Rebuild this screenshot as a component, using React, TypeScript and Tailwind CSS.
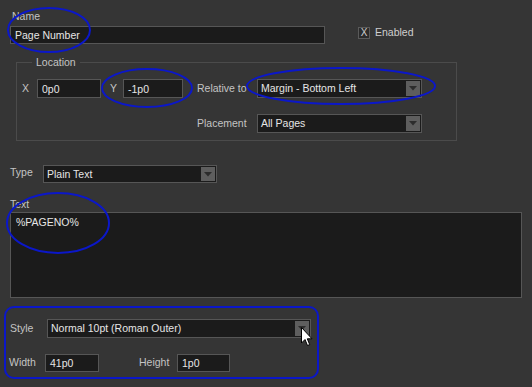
import React from "react";

const inputCls =
  "h-[18px] bg-[#1b1b1b] border border-[#565656] text-[#e6e6e6] px-[4px] leading-[16px] flex items-center";

function Arrow() {
  return (
    <div className="w-[14px] h-full bg-[#5e5e5e] flex items-center justify-center shrink-0">
      <svg width="8" height="5" viewBox="0 0 8 5">
        <path d="M0 0 L8 0 L4 4.5 Z" fill="#2c2c2c" />
      </svg>
    </div>
  );
}

function Select({ value, w, h = 19 }: { value: string; w: string; h?: number }) {
  return (
    <div
      className={`${w} ${h === 19 ? "h-[19px]" : "h-[18px]"} bg-[#1b1b1b] border border-[#565656] text-[#e6e6e6] flex items-stretch p-[1px]`}
    >
      <div className="flex-1 flex items-center pl-[2px] leading-none">{value}</div>
      <Arrow />
    </div>
  );
}

export default function App() {
  return (
    <div
      className="relative w-[532px] h-[387px] overflow-hidden bg-[#353535] text-[10.5px] text-[#c4c4c4]"
      style={{ fontFamily: '"Liberation Sans", Arial, sans-serif' }}
    >
      <div className="flex flex-col pl-[10px] pt-[9px]">
        {/* Name */}
        <div className="flex items-end">
          <div className="flex flex-col">
            <div className="h-[14px] leading-[14px] pl-[2px]">Name</div>
            <div className={`${inputCls} w-[315px] mt-[3px]`}>Page Number</div>
          </div>
          <div className="flex items-center ml-[33px] mb-[3px]">
            <div className="w-[12px] h-[12px] border border-[#5a5a5a] bg-[#2b2b2b] flex items-center justify-center text-[#cfcfcf] text-[10px] leading-none">
              X
            </div>
            <span className="ml-[5px] text-[#cfcfcf]">Enabled</span>
          </div>
        </div>

        {/* Location */}
        <fieldset className="ml-[6px] mt-[11px] w-[441px] h-[86px] border border-[#4b4b4b] px-[5px]">
          <legend className="ml-[10px] px-[4px] leading-[14px]">Location</legend>
          <div className="flex items-center mt-[10px]">
            <span className="w-[15px]">X</span>
            <div className={`${inputCls} w-[64px] h-[19px]`}>0p0</div>
            <span className="ml-[9px] w-[13px]">Y</span>
            <div className={`${inputCls} w-[60px] h-[19px]`}>-1p0</div>
            <span className="ml-[14px] w-[60px]">Relative to</span>
            <Select value="Margin - Bottom Left" w="w-[165px]" />
          </div>
          <div className="flex items-center mt-[16px]">
            <span className="ml-[175px] w-[60px]">Placement</span>
            <Select value="All Pages" w="w-[165px]" />
          </div>
        </fieldset>

        {/* Type */}
        <div className="flex items-center mt-[24px]">
          <span className="w-[33px] -mt-[3px]">Type</span>
          <Select value="Plain Text" w="w-[174px]" h={18} />
        </div>

        {/* Text */}
        <div className="h-[14px] leading-[14px] mt-[14px]">Text</div>
        <div className="w-[512px] h-[86px] mt-[1px] bg-[#1b1b1b] border border-[#565656] text-[#e6e6e6] px-[5px] pt-[2px]">
          %PAGENO%
        </div>

        {/* Style */}
        <div className="flex items-center mt-[21px]">
          <span className="w-[37px]">Style</span>
          <Select value="Normal 10pt (Roman Outer)" w="w-[264px]" />
        </div>
        <div className="flex items-center mt-[16px] -ml-[1px]">
          <span className="w-[36px]">Width</span>
          <div className={`${inputCls} w-[54px]`}>41p0</div>
          <span className="ml-[40px] w-[38px]">Height</span>
          <div className={`${inputCls} w-[53px]`}>1p0</div>
        </div>
      </div>

      {/* annotations overlay */}
      <svg className="absolute inset-0 pointer-events-none" width="532" height="387">
        <g fill="none" stroke="#0b17c9" strokeWidth="2">
          <ellipse cx="49" cy="30" rx="41" ry="22" />
          <ellipse cx="147" cy="88" rx="45" ry="19" />
          <ellipse cx="341" cy="86" rx="94" ry="18" />
          <ellipse cx="58" cy="223" rx="51" ry="30" />
          <rect x="5" y="307" width="313" height="71" rx="9" />
        </g>
      </svg>

      {/* cursor */}
      <svg className="absolute left-[301px] top-[327px] pointer-events-none" width="13" height="21" viewBox="0 0 13 21">
        <path
          d="M0.5 0.5 L0.5 16 L4 12.5 L6.5 18.5 L8.7 17.6 L6.3 11.8 L11 11.8 Z"
          fill="#ffffff"
          stroke="#000000"
          strokeWidth="1"
          strokeLinejoin="round"
        />
      </svg>
    </div>
  );
}
